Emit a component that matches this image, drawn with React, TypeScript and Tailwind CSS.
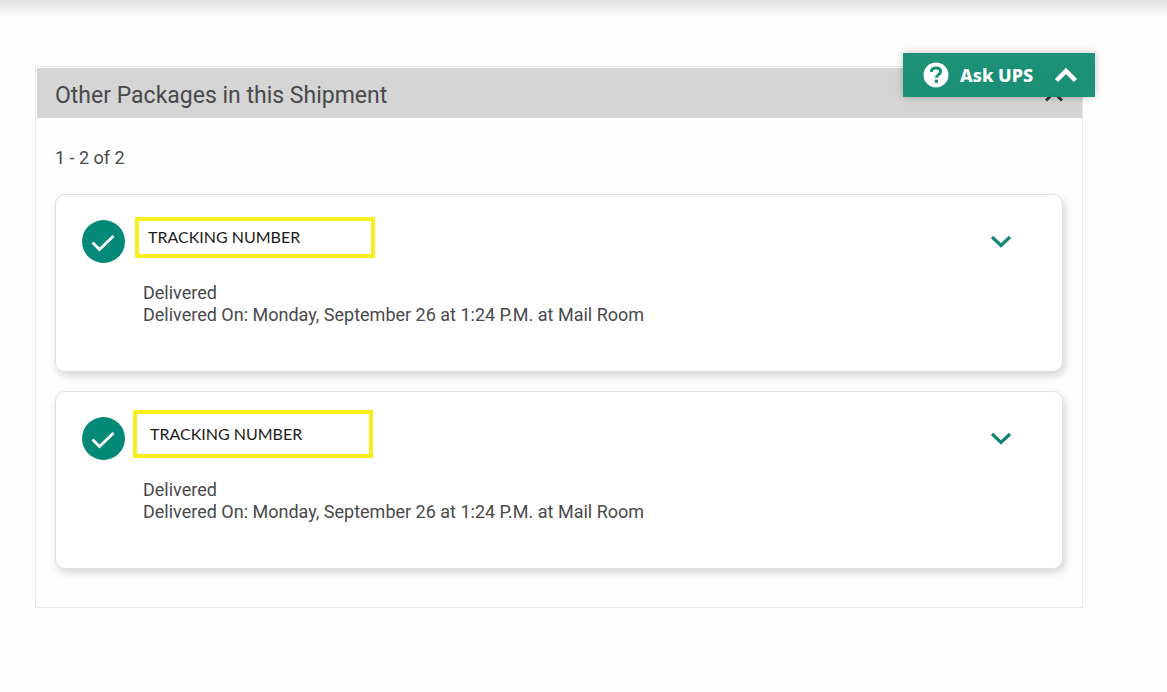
type Package = {
  label: string;
  status: string;
  detail: string;
  boxClass: string;
};

const packages: Package[] = [
  {
    label: "TRACKING NUMBER",
    status: "Delivered",
    detail: "Delivered On: Monday, September 26 at 1:24 P.M. at Mail Room",
    boxClass: "ml-[10px] h-[41px] pl-[9px]",
  },
  {
    label: "TRACKING NUMBER",
    status: "Delivered",
    detail: "Delivered On: Monday, September 26 at 1:24 P.M. at Mail Room",
    boxClass: "ml-2 h-12 pl-[13px]",
  },
];

function CheckBadge() {
  return (
    <svg viewBox="0 0 43 43" className="mt-[25px] size-[43px] shrink-0" aria-hidden="true">
      <circle cx="21.5" cy="21.5" r="21.5" fill="#048878" />
      <path d="M10.5 22.5 17.5 29.5 31.5 16" fill="none" stroke="#fff" strokeWidth="2.8" />
    </svg>
  );
}

function PackageCard({ item }: { item: Package }) {
  return (
    <li className="flex h-[178px] rounded-[10px] border border-[#e0e0e0] bg-white pr-[51px] pl-[26px] shadow-[2px_4px_8px_rgba(0,0,0,0.16)]">
      <CheckBadge />
      <div className="min-w-0 grow pt-[18px]">
        <div className="flex h-12 items-center">
          <div
            className={`flex w-60 items-center border-4 border-[#f8ee1c] font-['Lato',sans-serif] text-base text-[#1c1c1c] ${item.boxClass}`}
          >
            {item.label}
          </div>
        </div>
        <div className="mt-[21px] ml-[18px] text-[18px] leading-[22px]">
          <p>{item.status}</p>
          <p>{item.detail}</p>
        </div>
      </div>
      <button type="button" aria-label="Show package details" className="mt-9 size-5 shrink-0">
        <svg viewBox="0 0 20 20" className="size-5" aria-hidden="true">
          <path d="M1 6 10 14.5 19 6" fill="none" stroke="#148575" strokeWidth="3.2" />
        </svg>
      </button>
    </li>
  );
}

export default function App() {
  return (
    <div className="relative min-h-screen bg-[#fefefe] font-['Roboto',sans-serif] text-[#48494b]">
      <div className="h-[18px] bg-linear-to-b from-[#e1e1e3] to-[#fefefe]" />
      <main className="pt-12 pr-[84px] pb-20 pl-[35px]">
        <section className="border border-[#e8e8e8] pt-px pl-px">
          <header className="flex h-[50px] items-center justify-between bg-[#d5d5d5] pt-1.5 pr-[19px] pl-[18px]">
            <h1 className="text-[23px] leading-7">Other Packages in this Shipment</h1>
            <button type="button" aria-label="Collapse section" className="size-[18px]">
              <svg viewBox="0 0 18 18" className="size-[18px]" aria-hidden="true">
                <path d="M1 13.5 9 5.5 17 13.5" fill="none" stroke="#333" strokeWidth="3" />
              </svg>
            </button>
          </header>
          <div className="pt-[29px] pr-[19px] pb-[38px] pl-[18px]">
            <p className="text-[18px] leading-[22px]">1 - 2 of 2</p>
            <ul className="mt-[25px] flex flex-col gap-[19px]">
              {packages.map((item, index) => (
                <PackageCard key={index} item={item} />
              ))}
            </ul>
          </div>
        </section>
      </main>
      <button
        type="button"
        className="absolute top-[53px] right-[72px] flex h-11 w-48 items-center bg-[#188f75]/98 pr-[17px] pl-5 text-white shadow-[0_0_8px_rgba(0,0,0,0.25)]"
      >
        <svg viewBox="0 0 26 26" className="size-[26px]" aria-hidden="true">
          <circle cx="13" cy="13" r="12.5" fill="#fff" />
          <path
            d="M8.2 9.8C8.5 7.2 10.4 6 13 6c2.7 0 4.6 1.3 4.6 3.5 0 3-4.1 3.2-4.1 6.3"
            fill="none"
            stroke="#188f75"
            strokeWidth="3"
          />
          <rect x="11.8" y="17.6" width="3.2" height="3.2" fill="#188f75" />
        </svg>
        <span className="ml-[11px] font-['Noto_Sans',sans-serif] text-[18px] leading-6 font-extrabold">
          Ask UPS
        </span>
        <svg viewBox="0 0 24 16" className="ml-auto h-4 w-6" aria-hidden="true">
          <path d="M2.5 13.5 12 4 21.5 13.5" fill="none" stroke="#fff" strokeWidth="4.5" />
        </svg>
      </button>
    </div>
  );
}
